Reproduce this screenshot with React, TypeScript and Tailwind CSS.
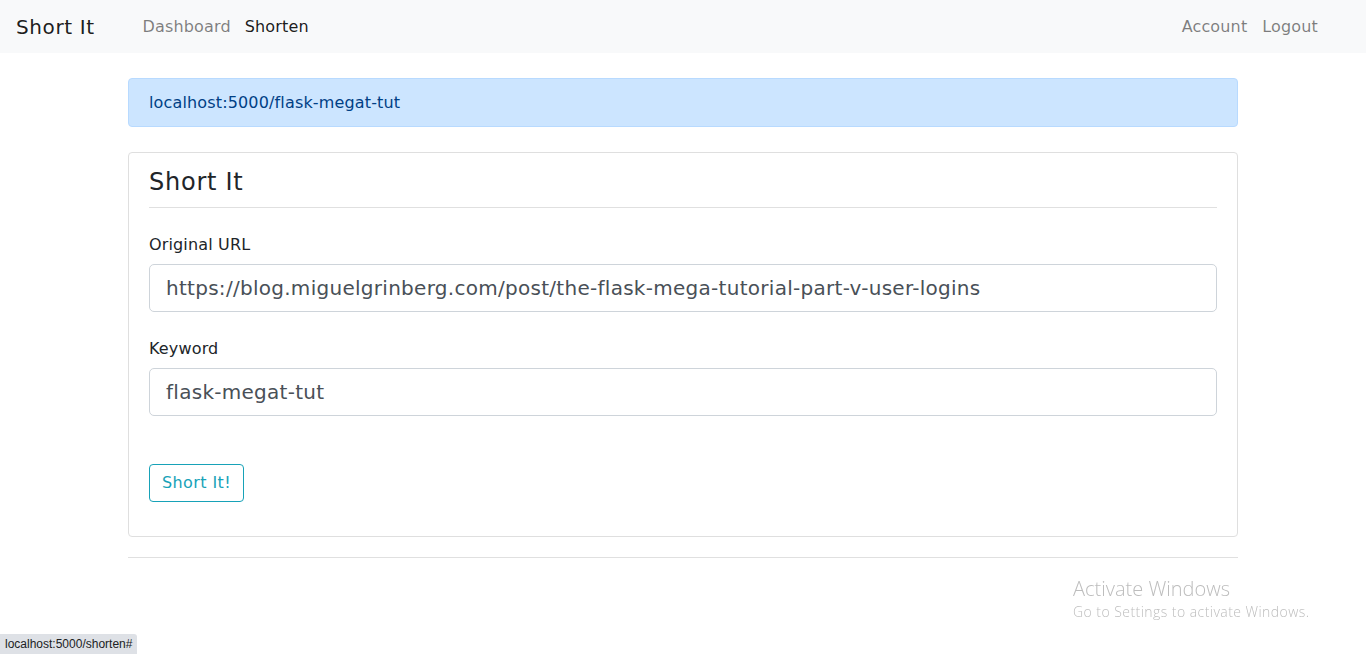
import React from 'react';

const font = "font-['DejaVu_Sans',sans-serif]";

const App: React.FC = () => {
  return (
    <div className={`${font} min-h-[654px] bg-white text-[#212529] relative tracking-[0.15px]`}>
      {/* Navbar */}
      <nav className="h-[53px] bg-[#f8f9fa] flex items-center pl-4 pr-[48px]">
        <a href="#" className="text-[20px] text-black/90 tracking-[0.6px] mr-[48px]">Short It</a>
        <div className="flex items-center gap-[14px] text-[16px]">
          <a href="#" className="text-black/50">Dashboard</a>
          <a href="#" className="text-black/90">Shorten</a>
        </div>
        <div className="ml-auto flex items-center gap-[15px] text-[16px]">
          <a href="#" className="text-black/50">Account</a>
          <a href="#" className="text-black/50">Logout</a>
        </div>
      </nav>

      <div className="w-[1110px] mx-auto">
        {/* Alert */}
        <div className="mt-[25px] h-[49px] flex items-center px-[20px] bg-[#cce5ff] border border-[#b8daff] rounded-[4px] text-[#004085] text-[16px]">
          localhost:5000/flask-megat-tut
        </div>

        {/* Card */}
        <div className="mt-[25px] border border-[#dfdfdf] rounded-[4px] px-[20px] pt-[15px] pb-[34px]">
          <h4 className="text-[24px] leading-[29px] tracking-[0.75px]">Short It</h4>
          <hr className="mt-[10px] border-t border-[#e0e0e0]" />

          <label className="block mt-[25px] text-[16px] leading-[24px]">Original URL</label>
          <div className="mt-[7px] h-[48px] border border-[#ced4da] rounded-[5px] flex items-center px-[16px] text-[20px] text-[#495057] tracking-[0.28px]">
            https://blog.miguelgrinberg.com/post/the-flask-mega-tutorial-part-v-user-logins
          </div>

          <label className="block mt-[25px] text-[16px] leading-[24px]">Keyword</label>
          <div className="mt-[7px] h-[48px] border border-[#ced4da] rounded-[5px] flex items-center px-[16px] text-[20px] text-[#495057] tracking-[0.28px]">
            flask-megat-tut
          </div>

          <button className="mt-[48px] h-[38px] px-[12px] border border-[#17a2b8] rounded-[4px] text-[#17a2b8] text-[16px] tracking-[0.4px]">
            Short It!
          </button>
        </div>

        <hr className="mt-[20px] border-t border-[#e0e0e0]" />
      </div>

      {/* Windows watermark */}
      <div className="fixed left-[1073px] top-[576px] text-[#bdbdbd] font-['Open_Sans',sans-serif] font-light tracking-normal">
        <div className="text-[20px] leading-[26px]">Activate Windows</div>
        <div className="text-[14px] leading-[20px] tracking-[0.45px]">Go to Settings to activate Windows.</div>
      </div>

      {/* Status bar */}
      <div className="fixed left-0 bottom-0 h-[20px] px-[5px] flex items-center bg-[#dee1e6] rounded-tr-[3px] text-[12px] text-[#202124] tracking-normal font-['Liberation_Sans',sans-serif]">
        localhost:5000/shorten#
      </div>
    </div>
  );
};

export default App;
